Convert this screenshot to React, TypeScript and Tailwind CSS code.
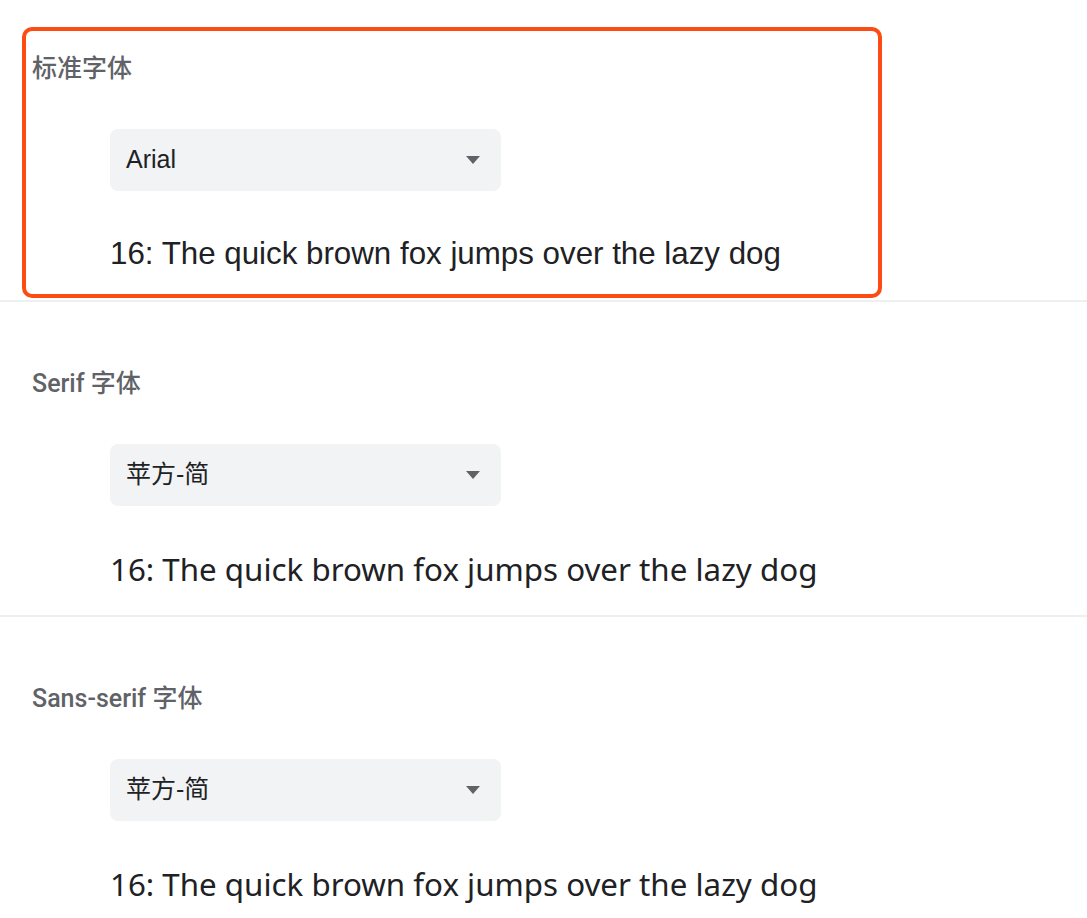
const sample = '16: The quick brown fox jumps over the lazy dog';

function Caret() {
  return (
    <svg width="14" height="8" viewBox="0 0 14 8" className="shrink-0">
      <path d="M0 0 H14 L7 8 Z" fill="#5f6368" />
    </svg>
  );
}

function FontSelect({ value }: { value: string }) {
  return (
    <div className="flex h-[62px] w-[391px] items-center justify-between rounded-[8px] bg-[#f1f3f4] pl-4 pr-[21px]">
      <span className="text-[25px] text-[#202124] [font-family:Arial,'Liberation_Sans','Noto_Sans_CJK_SC',sans-serif]">
        {value}
      </span>
      <Caret />
    </div>
  );
}

function FontSection({
  title,
  value,
  sampleFont,
  top,
  last,
}: {
  title: string;
  value: string;
  sampleFont: string;
  top: string;
  last?: boolean;
}) {
  return (
    <div className={`${top} ${last ? '' : 'border-b-2 border-[#eeeff1] pb-[26px]'}`}>
      <h2 className="pl-8 text-[25px] leading-8 font-medium text-[#5f6368] [font-family:Roboto,'Noto_Sans_CJK_SC',sans-serif]">
        {title}
      </h2>
      <div className="mt-[44px] pl-[110px]">
        <FontSelect value={value} />
        <p className={`mt-[43px] text-[31.3px] leading-10 text-[#202124] ${sampleFont}`}>{sample}</p>
      </div>
    </div>
  );
}

export default function App() {
  return (
    <div className="relative h-[918px] w-full overflow-hidden bg-white">
      <FontSection
        title="标准字体"
        value="Arial"
        top="pt-[53px]"
        sampleFont="[font-family:Arial,'Liberation_Sans',sans-serif]"
      />
      <FontSection
        title="Serif 字体"
        value="苹方-简"
        top="pt-[66px]"
        sampleFont="[font-family:'Noto_Sans','Noto_Sans_CJK_SC',sans-serif]"
      />
      <FontSection
        title="Sans-serif 字体"
        value="苹方-简"
        top="pt-[66px]"
        sampleFont="[font-family:'Noto_Sans','Noto_Sans_CJK_SC',sans-serif]"
        last
      />
      {/* highlight annotation over the first block */}
      <div className="pointer-events-none absolute left-[22px] top-[27px] h-[271px] w-[860px] rounded-[10px] border-4 border-[#fd4b14]" />
    </div>
  );
}
